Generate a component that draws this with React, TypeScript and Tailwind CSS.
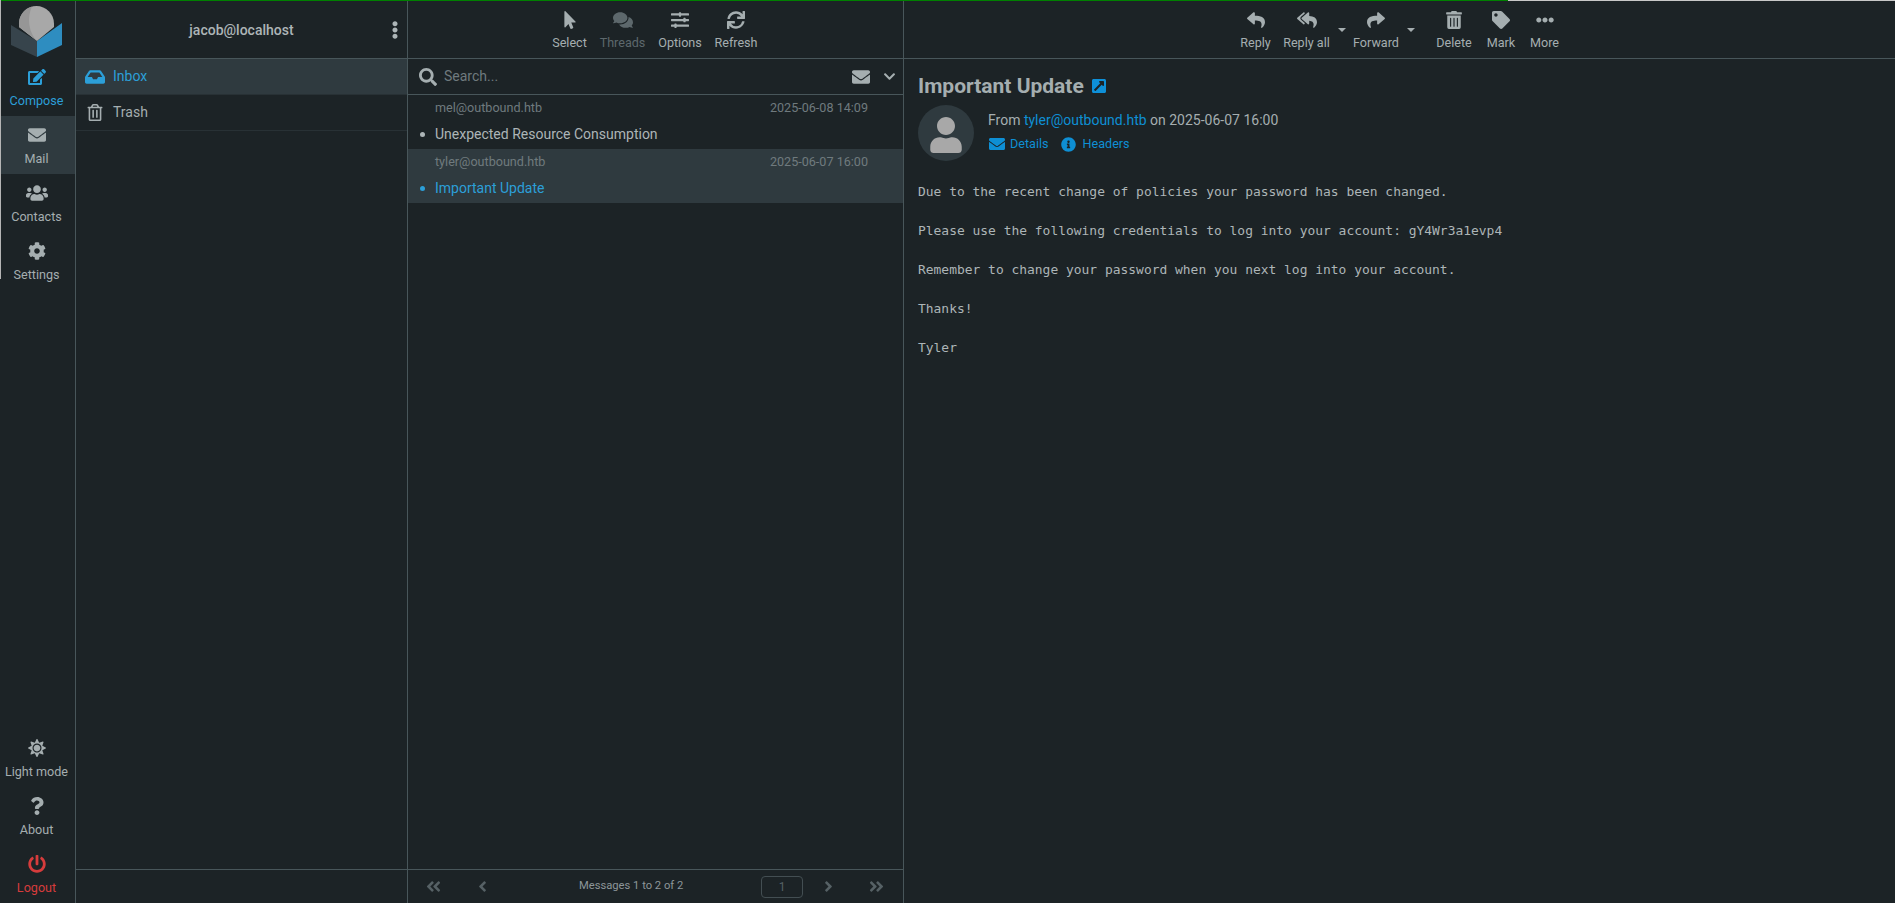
import React from "react";
import {
  FaEdit, FaEnvelope, FaUsers, FaCog, FaSun, FaQuestion, FaPowerOff, FaInbox, FaRegTrashAlt, FaEllipsisV,
  FaMousePointer, FaComments, FaSlidersH, FaSync, FaSearch, FaChevronDown, FaAngleDoubleLeft, FaAngleLeft,
  FaAngleRight, FaAngleDoubleRight, FaReply, FaReplyAll, FaShare, FaTrashAlt, FaTag, FaEllipsisH,
  FaExternalLinkSquareAlt, FaInfoCircle, FaUser,
} from "react-icons/fa";

function Logo() {
  return (
    <svg width="75" height="57" viewBox="0 1 75 57">
      <path d="M11 25 L37 41 L37 57 L11 45 Z" fill="#37444c" />
      <path d="M62 23 L37 41 L37 57 L62 45 Z" fill="#2e8dc0" />
      <path d="M36.5 6 A17.7 17.7 0 0 1 54 23.5 L54 27 L37 41 L19 27 L19 23.5 A17.7 17.7 0 0 1 36.5 6 Z" fill="#a8a8a8" />
      <path d="M32 6.6 A17.7 17.7 0 0 0 19 23.5 L19 27 L37 41 C30 34 26 20 32 6.6 Z" fill="#969696" />
    </svg>
  );
}

function Nav({ icon, label, cls = "text-[#a5aeb0]", active = false }: { icon: React.ReactNode; label: string; cls?: string; active?: boolean }) {
  return (
    <div className={`flex h-[58px] flex-col items-center pr-[2px] pt-[10px] ${cls} ${active ? "bg-[#2f3a3f]" : ""}`}>
      <div className="flex h-[18px] items-center text-[18px]">{icon}</div>
      <div className="mt-[7px] text-[12.6px] leading-[15px] whitespace-nowrap">{label}</div>
    </div>
  );
}

function Tool({ icon, label, w, dim = false, caret = false }: { icon: React.ReactNode; label: string; w: string; dim?: boolean; caret?: boolean }) {
  return (
    <div className={`relative flex flex-col items-center ${w} ${dim ? "text-[#5d686c]" : "text-[#a5aeb0]"}`}>
      <div className="flex h-[18px] items-center text-[18px]">{icon}</div>
      <div className="mt-[6px] text-[12.6px] leading-[15px] whitespace-nowrap">{label}</div>
      {caret && <div className="absolute right-[-16px] top-[17px] h-0 w-0 border-x-[4px] border-t-[4px] border-x-transparent border-t-[#a5aeb0]" />}
    </div>
  );
}

function Message({ from, date, subject, selected = false }: { from: string; date: string; subject: string; selected?: boolean }) {
  return (
    <div className={`flex h-[54px] flex-col ${selected ? "bg-[#2f3a3f]" : ""}`}>
      <div className="flex h-[26px] items-center justify-between pl-[27px] pr-[35px] text-[12.6px] text-[#6f7a7e]">
        <span>{from}</span>
        <span>{date}</span>
      </div>
      <div className={`flex h-[27px] items-center text-[14px] ${selected ? "text-[#2c9fd8]" : "text-[#adb5b7]"}`}>
        <span className="flex w-[27px] justify-center pl-[1px]">
          <span className={`h-[5px] w-[5px] rounded-full ${selected ? "bg-[#2c9fd8]" : "bg-[#adb5b7]"}`} />
        </span>
        <span>{subject}</span>
      </div>
    </div>
  );
}

export default function App() {
  return (
    <div className="relative flex h-screen flex-col overflow-hidden bg-[#1c2326] text-[#a5aeb0]" style={{ fontFamily: "Roboto, sans-serif" }}>
      <div className="flex h-px shrink-0">
        <div className="w-[1508px] bg-[#008000]" />
        <div className="flex-1 bg-[#c8c8c8]" />
      </div>
      <div className="absolute left-0 top-0 h-[279px] w-px bg-[#b5b5b5]" />
      <div className="flex min-h-0 flex-1">
        <aside className="flex w-[76px] shrink-0 flex-col border-r border-[#48565a]">
          <div className="h-[57px] shrink-0"><Logo /></div>
          <Nav icon={<FaEdit />} label="Compose" cls="text-[#2c9fd8]" />
          <Nav icon={<FaEnvelope />} label="Mail" active />
          <Nav icon={<FaUsers className="text-[22px]" />} label="Contacts" />
          <Nav icon={<FaCog />} label="Settings" />
          <div className="flex-1" />
          <Nav icon={<FaSun />} label="Light mode" />
          <Nav icon={<FaQuestion />} label="About" />
          <Nav icon={<FaPowerOff />} label="Logout" cls="text-[#d63c3c]" />
        </aside>

        <section className="flex w-[332px] shrink-0 flex-col border-r border-[#48565a]">
          <header className="relative flex h-[58px] shrink-0 items-center justify-center border-b border-[#48565a] pt-[2px] text-[14px] font-medium text-[#adb5b7]">
            jacob@localhost
            <FaEllipsisV className="absolute right-[3px] top-[20px] text-[18px]" />
          </header>
          <div className="flex h-[36px] items-center border-b border-[#283135] bg-[#2f3a3f] pl-[9px] text-[14px] text-[#2c9fd8]">
            <FaInbox className="mr-[8px] w-[20px] text-[20px]" />Inbox
          </div>
          <div className="flex h-[36px] items-center border-b border-[#283135] pl-[9px] text-[14px] text-[#a5aeb0]">
            <FaRegTrashAlt className="mr-[8px] w-[20px] text-[17px]" />Trash
          </div>
          <div className="flex-1" />
          <div className="h-[34px] border-t border-[#48565a]" />
        </section>

        <section className="flex w-[496px] shrink-0 flex-col border-r border-[#48565a]">
          <header className="flex h-[58px] shrink-0 items-start justify-center gap-[13px] border-b border-[#48565a] pl-[2px] pr-[3px] pt-[10px]">
            <Tool icon={<FaMousePointer />} label="Select" w="w-[34px]" />
            <Tool icon={<FaComments className="text-[20px]" />} label="Threads" w="w-[46px]" dim />
            <Tool icon={<FaSlidersH />} label="Options" w="w-[43px]" />
            <Tool icon={<FaSync />} label="Refresh" w="w-[43px]" />
          </header>
          <div className="flex h-[36px] shrink-0 items-center border-b border-[#48565a] pl-[11px] pr-[7px]">
            <FaSearch className="text-[18px]" />
            <span className="ml-[7px] flex-1 text-[14px] text-[#6f7a7e]">Search...</span>
            <FaEnvelope className="mr-[13px] text-[18px]" />
            <FaChevronDown className="text-[13px]" />
          </div>
          <Message from="mel@outbound.htb" date="2025-06-08 14:09" subject="Unexpected Resource Consumption" />
          <Message from="tyler@outbound.htb" date="2025-06-07 16:00" subject="Important Update" selected />
          <div className="flex-1" />
          <footer className="flex h-[34px] items-center border-t border-[#48565a] text-[#566165]">
            <FaAngleDoubleLeft className="ml-[17px] text-[17px]" />
            <FaAngleLeft className="ml-[32px] text-[17px]" />
            <span className="ml-[88px] w-[122px] whitespace-nowrap text-[11.2px] text-[#8d9699]">Messages 1 to 2 of 2</span>
            <span className="ml-[60px] flex h-[22px] w-[42px] items-center justify-center rounded border border-[#434e52] text-[12px]">1</span>
            <FaAngleRight className="ml-[17px] text-[17px]" />
            <FaAngleDoubleRight className="ml-[31px] text-[17px]" />
          </footer>
        </section>

        <main className="flex min-w-0 flex-1 flex-col">
          <header className="flex h-[58px] shrink-0 items-start border-b border-[#48565a] pl-[336px] pt-[10px]">
            <Tool icon={<FaReply />} label="Reply" w="w-[31px]" />
            <Tool icon={<FaReplyAll className="text-[20px]" />} label="Reply all" w="ml-[12px] w-[47px]" caret />
            <Tool icon={<FaShare />} label="Forward" w="ml-[23px] w-[46px]" caret />
            <Tool icon={<FaTrashAlt />} label="Delete" w="ml-[37px] w-[36px]" />
            <Tool icon={<FaTag />} label="Mark" w="ml-[15px] w-[28px]" />
            <Tool icon={<FaEllipsisH />} label="More" w="ml-[15px] w-[29px]" />
          </header>
          <div className="px-[14px]">
            <div className="mt-[15px] flex items-center text-[21px] font-bold leading-[24px] text-[#a5aeb0]">
              Important Update
              <FaExternalLinkSquareAlt className="ml-[7px] text-[16px] text-[#0e90d8]" />
            </div>
            <div className="mt-[7px] flex">
              <div className="flex h-[56px] w-[56px] items-end justify-center overflow-hidden rounded-full bg-[#2f3a3f] pb-[8px]">
                <FaUser className="text-[36px] text-[#a8a8a8]" />
              </div>
              <div className="ml-[14px]">
                <div className="mt-[6px] text-[14px] leading-[18px]">
                  From <span className="text-[#0e8fd4]">tyler@outbound.htb</span> on 2025-06-07 16:00
                </div>
                <div className="mt-[7px] flex items-center text-[12.6px] leading-[16px] text-[#0e8fd4]">
                  <FaEnvelope className="ml-px mr-[5px] text-[16px]" />Details
                  <FaInfoCircle className="ml-[12px] mr-[7px] text-[15px]" />Headers
                </div>
              </div>
            </div>
            <pre className="mt-[21px] text-[12.95px] leading-[19.5px] text-[#adb5b7]" style={{ fontFamily: "'DejaVu Sans Mono', monospace" }}>{`Due to the recent change of policies your password has been changed.

Please use the following credentials to log into your account: gY4Wr3a1evp4

Remember to change your password when you next log into your account.

Thanks!

Tyler`}</pre>
          </div>
        </main>
      </div>
    </div>
  );
}
